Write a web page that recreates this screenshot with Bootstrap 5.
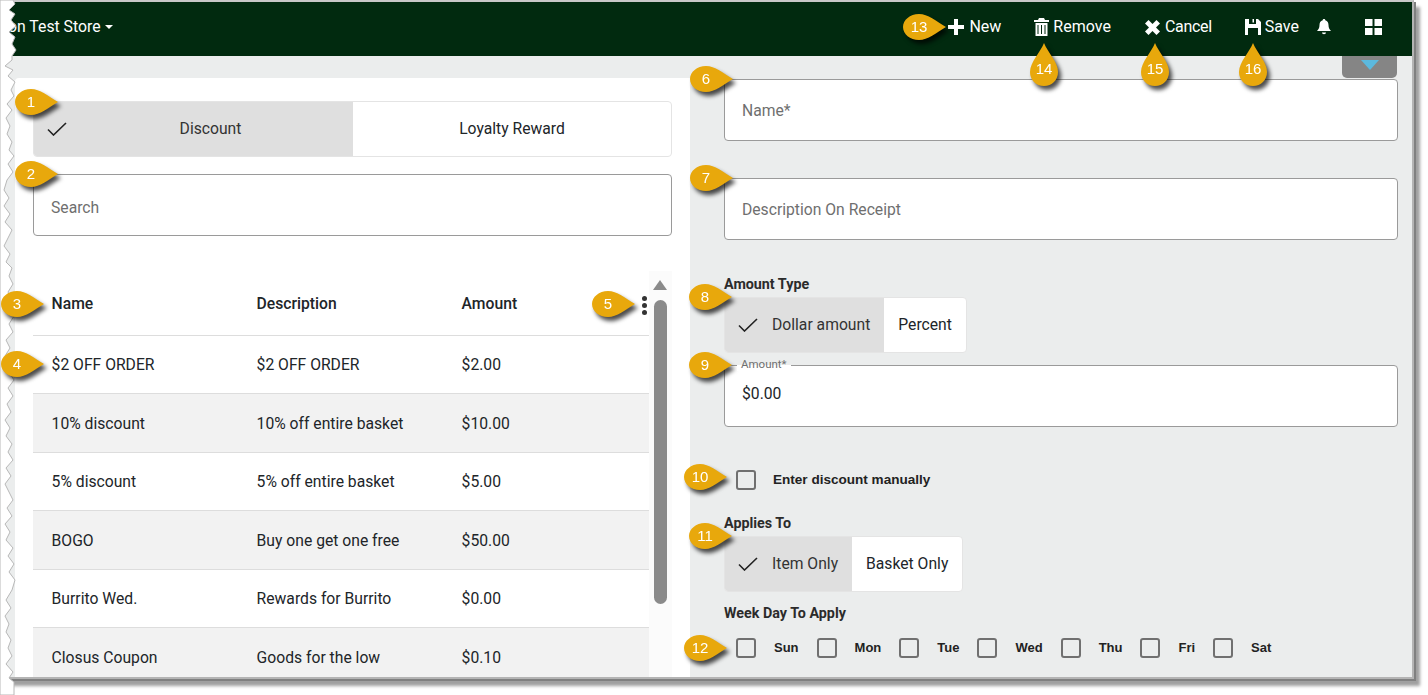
<!DOCTYPE html>
<html lang="en">
<head>
<meta charset="utf-8">
<title>Discounts</title>
<link href="https://cdn.jsdelivr.net/npm/bootstrap@5.3.0/dist/css/bootstrap.min.css" rel="stylesheet">
<style>
html{overflow:hidden}
body{margin:0;background:#fff;height:695px;font-family:Roboto,"Liberation Sans",sans-serif;color:#212529}
.shot{position:relative;width:1414px;height:679px;border-top:2px solid #c8c8c8;border-right:2px solid #b4b4b4;border-bottom:2px solid #b4b4b4;background:#ebeded;box-shadow:2px 2px 0 #808080,6px 7px 3px #a0a0a0}
.topbar{height:54px;background:#012a0f;color:#fff;font-size:16px;padding:0 30px 4px 8px}
.topbar .act{color:#fff;text-decoration:none;display:flex;align-items:center;gap:4px}
.a-new{margin-right:33px}.a-rem{margin-right:34px}.a-can{margin-right:33px}.a-sav{margin-right:18px}.a-bell{margin-right:34px}
.topbar .a-new,.topbar .a-can{gap:5px}
.a-can{letter-spacing:-.3px}
.storename{font-size:15.8px}
.caret{width:0;height:0;border-left:4px solid transparent;border-right:4px solid transparent;border-top:4px solid #fff;margin-left:4px}
.workarea{height:621px}
.leftcol{width:690px;padding:22px 0 0 15px;flex:none;overflow:hidden}
.leftpanel{background:#fff;height:100%;padding:23px 19px 0 18px;overflow:hidden;border-top-left-radius:4px}
.rightcol{flex:1;padding:0 14px 0 34px;min-width:0}
.tog{display:inline-flex;height:56px;background:#fff;border:1px solid #e4e4e4;border-radius:4px;overflow:hidden;font-size:15.7px;color:#212529}
.tog-wide{display:flex;width:639px;height:56px}
.tog-opt{display:flex;align-items:center;padding:0 14px;white-space:nowrap}
.tog-on{background:#dfdfdf;padding-left:13px;gap:14px;color:#333}
.tog-wide .tog-opt{flex:1;justify-content:center}
.tog-wide .tog-on{flex:none;width:319px;justify-content:flex-start;gap:0}
.tog-wide .tog-on span{flex:1;text-align:center}
.tog-wide .tog-on svg{margin-right:15px}
.fieldbox.form-control{height:62px;border:1px solid #9a9a9a;border-radius:4px;padding:0 17px;font-size:15.7px;background:#fff;color:#212529;box-shadow:none}
.fieldbox::placeholder{color:#6f6f6f;opacity:1}
.fieldbox.gap-search{margin:17px 0 35px;width:639px;padding-top:5px}
.fieldbox.amtfield{padding-bottom:6px}
.listwrap{width:639px}
.gridtable{width:616px;margin:0;flex:none;table-layout:fixed;font-size:15.7px}
.gridtable th,.gridtable td{padding:2px 0 0 18.6px;vertical-align:middle;border-bottom:1px solid #ddd;height:58.5px;background:transparent;box-shadow:none;color:#212529}
.gridtable th{height:64px;font-weight:500}
.gridtable th:nth-child(1),.gridtable th:nth-child(2),.gridtable th:nth-child(3){width:205px}
.gridtable tbody tr:nth-child(even) td{background:#f2f2f2}
.kebab{display:flex;flex-direction:column;gap:2px;position:absolute;right:2px;top:25px}
.kebab i{display:block;width:5px;height:5px;border-radius:50%;background:#333}
.headcell{position:relative}
.scrolltrack{width:23px;background:#fbfbfb;flex:none;padding:9px 0 0 4px}
.scroll-up{width:0;height:0;border-left:7.5px solid transparent;border-right:7.5px solid transparent;border-bottom:10px solid #8a8a8a;margin-bottom:10px}
.scroll-thumb{width:13px;height:304px;margin-left:1px;background:#8a8a8a;border-radius:7px}
.pulltab{height:23px;display:flex;justify-content:flex-end;padding-right:1px}
.pulltab div{width:55px;height:22px;background:#858585;border-radius:0 0 5px 5px;display:flex;justify-content:center;padding-top:4px}
.pulltab i{width:0;height:0;border-left:9px solid transparent;border-right:9px solid transparent;border-top:10px solid #5bb9de}
.gap37{margin-top:37px}
.fieldlabel{font-size:14.3px;font-weight:700;line-height:16px;margin:0;color:#2b2b2b;display:block}
.lab-amt{margin:36px 0 5px}
.amtwrap{position:relative;margin-top:12px}
.amtlabel{position:absolute;left:13px;top:-8px;padding:0 4px;font-size:11.5px;line-height:14px;color:#6f6f6f;background:linear-gradient(#ebeded 55%,#fff 55%);z-index:6}
.checkrow{margin:43px 0 0 12px;gap:17px;height:20px}
.sqbox{appearance:none;width:20px;height:20px;margin:0;flex:none;border:2px solid #707070;border-radius:3px;background:transparent;display:block}
.checktext{font-family:"Liberation Sans",Arial,sans-serif;font-size:13.55px;font-weight:700;color:#222;margin:0}
.lab-app{margin:25px 0 5px}
.lab-week{margin:13px 0 17px}
.dayrow{margin-left:12px;gap:18px;height:20px}
.dayitem{display:flex;align-items:center;gap:18px}
.dayitem .checktext{font-size:13px}
.torn{position:absolute;left:0;top:-2px;width:30px;height:695px;pointer-events:none}
.drop{position:absolute;width:44px;height:28px;filter:drop-shadow(3px 4px 2px rgba(0,0,0,.7));z-index:3}
.drop svg{display:block;width:44px;height:28px}
.drop span{position:absolute;left:0;top:0;width:32px;height:28px;text-align:center;font:15px/28px "Liberation Sans",Arial,sans-serif;color:#fff}
.dropdown-pt{width:30px;height:45px}
.dropdown-pt svg{width:30px;height:45px}
.dropdown-pt span{top:13px;width:30px}
.c1{left:15px;top:88px}.c2{left:15px;top:160px}.c3{left:1px;top:290px}.c4{left:1px;top:350px}
.c5{left:592px;top:290px}.c6{left:690px;top:65px}.c7{left:690px;top:164px}.c8{left:689px;top:283px}
.c9{left:689px;top:351px}.c10{left:684px;top:463px}.c11{left:689px;top:522px}.c12{left:684px;top:634px}
.c13{left:903px;top:13px}.c14{left:1029px;top:42px}.c15{left:1140px;top:42px}.c16{left:1238px;top:42px}
</style>
</head>
<body>
<svg width="0" height="0" class="position-absolute">
  <defs>
    <symbol id="dropR" viewBox="0 0 44 28"><path d="M16 1C25 1 33 8 43 14C33 20 25 27 16 27C7 27 0 21 0 14C0 7 7 1 16 1Z" fill="#e8a80c"/></symbol>
    <symbol id="dropU" viewBox="0 0 30 45"><path d="M15 1C19 11 29 20 29 30C29 38 23 44 15 44C7 44 1 38 1 30C1 20 11 11 15 1Z" fill="#e8a80c"/></symbol>
    <symbol id="tick" viewBox="0 0 20 14"><path d="M1 7.500L6.500 13L19 1" fill="none" stroke="#222" stroke-width="1.6"/></symbol>
  </defs>
</svg>
<div class="shot">
  <nav class="topbar d-flex align-items-center">
    <span class="d-flex align-items-center storename">on Test Store<span class="caret"></span></span>
    <div class="ms-auto d-flex align-items-center">
      <a class="act a-new" href="#"><svg width="16" height="16" viewBox="0 0 16 16"><path d="M6 0h4v6h6v4h-6v6H6v-6H0V6h6z" fill="#fff"/></svg>New</a>
      <a class="act a-rem" href="#"><svg width="15" height="18" viewBox="0 0 15 18"><path d="M5 0h5l1 2h4v2H0V2h4zM1.500 5h12v13h-12zM3.500 7v9h1V7zM7 7v9h1V7zM10.500 7v9h1V7z" fill="#fff" fill-rule="evenodd"/></svg>Remove</a>
      <a class="act a-can" href="#"><svg width="15" height="15" viewBox="0 0 15 15"><path d="M3.500 0L7.500 4 11.500 0 15 3.500 11 7.500 15 11.500 11.500 15 7.500 11 3.500 15 0 11.500 4 7.500 0 3.500z" fill="#fff"/></svg>Cancel</a>
      <a class="act a-sav" href="#"><svg width="16" height="16" viewBox="0 0 16 16"><path d="M0 0h13l3 3v13H0zM4 0v5h7V0h-2v3.500H7.500V0zM3 9v7h10V9z" fill="#fff" fill-rule="evenodd"/></svg>Save</a>
      <a class="act a-bell" href="#"><svg width="14" height="16" viewBox="0 0 14 16"><path d="M7 0c.8 0 1.300.5 1.300 1.200C10.600 1.800 11.500 3.800 11.500 6c0 3 1 4.500 2.500 6H0c1.500-1.500 2.500-3 2.500-6 0-2.200.9-4.200 3.200-4.800C5.700.5 6.200 0 7 0zM5 13.500h4c0 1-.9 1.700-2 1.700s-2-.7-2-1.700z" fill="#fff"/></svg></a>
      <a class="act" href="#"><svg width="17" height="16" viewBox="0 0 17 16"><path d="M0 0h7.500v7H0zM9.500 0H17v7H9.500zM0 9h7.500v7H0zM9.500 9H17v7H9.500z" fill="#fff"/></svg></a>
    </div>
  </nav>
  <div class="workarea d-flex">
    <div class="leftcol">
      <div class="leftpanel">
        <div class="tog tog-wide">
          <div class="tog-opt tog-on"><svg width="20" height="14"><use href="#tick"/></svg><span>Discount</span></div>
          <div class="tog-opt">Loyalty Reward</div>
        </div>
        <input class="form-control fieldbox gap-search" placeholder="Search" aria-label="Search">
        <div class="listwrap d-flex">
          <table class="table gridtable">
            <thead><tr><th>Name</th><th>Description</th><th>Amount</th><th class="headcell"><span class="kebab"><i></i><i></i><i></i></span></th></tr></thead>
            <tbody>
              <tr><td>$2 OFF ORDER</td><td>$2 OFF ORDER</td><td>$2.00</td><td></td></tr>
              <tr><td>10% discount</td><td>10% off entire basket</td><td>$10.00</td><td></td></tr>
              <tr><td>5% discount</td><td>5% off entire basket</td><td>$5.00</td><td></td></tr>
              <tr><td>BOGO</td><td>Buy one get one free</td><td>$50.00</td><td></td></tr>
              <tr><td>Burrito Wed.</td><td>Rewards for Burrito</td><td>$0.00</td><td></td></tr>
              <tr><td>Closus Coupon</td><td>Goods for the low</td><td>$0.10</td><td></td></tr>
            </tbody>
          </table>
          <div class="scrolltrack"><div class="scroll-up"></div><div class="scroll-thumb"></div></div>
        </div>
      </div>
    </div>
    <div class="rightcol">
      <div class="pulltab"><div><i></i></div></div>
      <input class="form-control fieldbox" placeholder="Name*" aria-label="Name">
      <input class="form-control fieldbox gap37" placeholder="Description On Receipt" aria-label="Description On Receipt">
      <span class="fieldlabel lab-amt">Amount Type</span>
      <div class="tog">
        <div class="tog-opt tog-on"><svg width="20" height="14"><use href="#tick"/></svg><span>Dollar amount</span></div>
        <div class="tog-opt">Percent</div>
      </div>
      <div class="amtwrap">
        <span class="amtlabel">Amount*</span>
        <input class="form-control fieldbox amtfield" value="$0.00" aria-label="Amount">
      </div>
      <div class="checkrow d-flex align-items-center">
        <input type="checkbox" class="sqbox" id="manual">
        <label class="checktext" for="manual">Enter discount manually</label>
      </div>
      <span class="fieldlabel lab-app">Applies To</span>
      <div class="tog">
        <div class="tog-opt tog-on"><svg width="20" height="14"><use href="#tick"/></svg><span>Item Only</span></div>
        <div class="tog-opt">Basket Only</div>
      </div>
      <span class="fieldlabel lab-week">Week Day To Apply</span>
      <div class="dayrow d-flex align-items-center">
        <div class="dayitem"><input type="checkbox" class="sqbox" id="d1"><label class="checktext" for="d1">Sun</label></div>
        <div class="dayitem"><input type="checkbox" class="sqbox" id="d2"><label class="checktext" for="d2">Mon</label></div>
        <div class="dayitem"><input type="checkbox" class="sqbox" id="d3"><label class="checktext" for="d3">Tue</label></div>
        <div class="dayitem"><input type="checkbox" class="sqbox" id="d4"><label class="checktext" for="d4">Wed</label></div>
        <div class="dayitem"><input type="checkbox" class="sqbox" id="d5"><label class="checktext" for="d5">Thu</label></div>
        <div class="dayitem"><input type="checkbox" class="sqbox" id="d6"><label class="checktext" for="d6">Fri</label></div>
        <div class="dayitem"><input type="checkbox" class="sqbox" id="d7"><label class="checktext" for="d7">Sat</label></div>
      </div>
    </div>
  </div>
  <svg class="torn" viewBox="0 0 30 695">
    <polygon fill="#fff" stroke="#b8b8b8" stroke-width="1" points="0,0 13,0 15,4 9,10 15,14 11,20 16,26 9,32 15,37 12,44 16,50 12,56 12,60 5,66 13,70 8,76 15,82 11,90 14,96 7,104 12,110 6,118 10,126 7,134 12,142 9,150 14,156 8,164 13,172 7,180 4,190 9,198 4,206 10,214 5,222 12,230 8,238 4,246 10,254 6,262 12,268 9,276 13,284 8,292 12,300 7,308 14,316 9,324 13,332 6,340 10,348 5,356 12,364 9,372 14,380 8,388 13,396 7,404 11,412 5,420 10,428 6,436 12,444 8,452 13,460 6,468 11,476 5,484 9,492 13,500 7,508 12,516 5,524 10,532 6,540 13,548 8,556 14,564 9,572 15,580 12,590 6,600 11,608 5,616 9,624 6,632 11,640 8,648 12,656 6,664 13,672 9,678 14,682 14,695 0,695"/>
  </svg>
</div>
<div class="drop c1"><svg><use href="#dropR"/></svg><span>1</span></div>
<div class="drop c2"><svg><use href="#dropR"/></svg><span>2</span></div>
<div class="drop c3"><svg><use href="#dropR"/></svg><span>3</span></div>
<div class="drop c4"><svg><use href="#dropR"/></svg><span>4</span></div>
<div class="drop c5"><svg><use href="#dropR"/></svg><span>5</span></div>
<div class="drop c6"><svg><use href="#dropR"/></svg><span>6</span></div>
<div class="drop c7"><svg><use href="#dropR"/></svg><span>7</span></div>
<div class="drop c8"><svg><use href="#dropR"/></svg><span>8</span></div>
<div class="drop c9"><svg><use href="#dropR"/></svg><span>9</span></div>
<div class="drop c10"><svg><use href="#dropR"/></svg><span>10</span></div>
<div class="drop c11"><svg><use href="#dropR"/></svg><span>11</span></div>
<div class="drop c12"><svg><use href="#dropR"/></svg><span>12</span></div>
<div class="drop c13"><svg><use href="#dropR"/></svg><span>13</span></div>
<div class="drop dropdown-pt c14"><svg><use href="#dropU"/></svg><span>14</span></div>
<div class="drop dropdown-pt c15"><svg><use href="#dropU"/></svg><span>15</span></div>
<div class="drop dropdown-pt c16"><svg><use href="#dropU"/></svg><span>16</span></div>
<script src="https://cdn.jsdelivr.net/npm/bootstrap@5.3.0/dist/js/bootstrap.bundle.min.js"></script>
</body>
</html>
